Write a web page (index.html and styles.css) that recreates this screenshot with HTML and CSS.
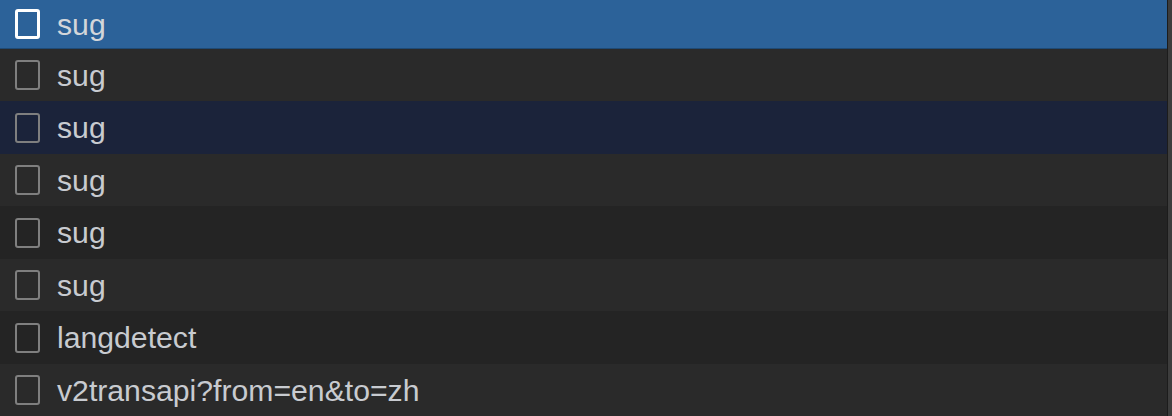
FILE: index.html
```html
<!DOCTYPE html>
<html>
<head>
<meta charset="utf-8">
<link rel="stylesheet" href="styles.css">
</head>
<body>
<div class="panel">
  <ul class="list">
    <li class="row selected first"><span class="check"></span><span class="name">sug</span></li>
    <li class="row"><span class="check"></span><span class="name">sug</span></li>
    <li class="row hover tall"><span class="check"></span><span class="name">sug</span></li>
    <li class="row"><span class="check"></span><span class="name">sug</span></li>
    <li class="row alt tall"><span class="check"></span><span class="name">sug</span></li>
    <li class="row"><span class="check"></span><span class="name">sug</span></li>
    <li class="row alt tall"><span class="check"></span><span class="name">langdetect</span></li>
    <li class="row"><span class="check"></span><span class="name">v2transapi?from=en&amp;to=zh</span></li>
  </ul>
  <div class="scrollbar"></div>
</div>
</body>
</html>
```
FILE: styles.css
```css
html, body {
  margin: 0;
  padding: 0;
  background: #2a2a2a;
  overflow: hidden;
}
.panel {
  display: flex;
  width: 1172px;
  height: 416px;
}
.list {
  list-style: none;
  margin: 0;
  padding: 0;
  flex: 1;
  display: flex;
  flex-direction: column;
}
.row {
  height: 52px;
  display: flex;
  align-items: center;
  background: #2a2a2a;
  font-family: "Liberation Sans", Arial, sans-serif;
  font-size: 30.2px;
  color: #c8cbd0;
  flex: none;
}
.row.tall { height: 53px; }
.row.alt { background: #242424; }
.row.hover { background: #1b233a; }
.row.selected {
  background: #2c6299;
  border-bottom: 1px solid #1f4a75;
  height: 48px;
  color: #d3d6da;
}
.check {
  box-sizing: border-box;
  width: 25px;
  height: 30px;
  margin-left: 15px;
  margin-right: 17px;
  border: 2px solid #7f7f7f;
  border-radius: 3px;
  flex: none;
}
.selected .check {
  border: 3px solid #ffffff;
}
.name {
  line-height: 1;
  position: relative;
  top: 1px;
}
.scrollbar {
  width: 4px;
  flex: none;
  border-left: 1px solid #1c1c1c;
  background: #3d3d3d;
}
```
